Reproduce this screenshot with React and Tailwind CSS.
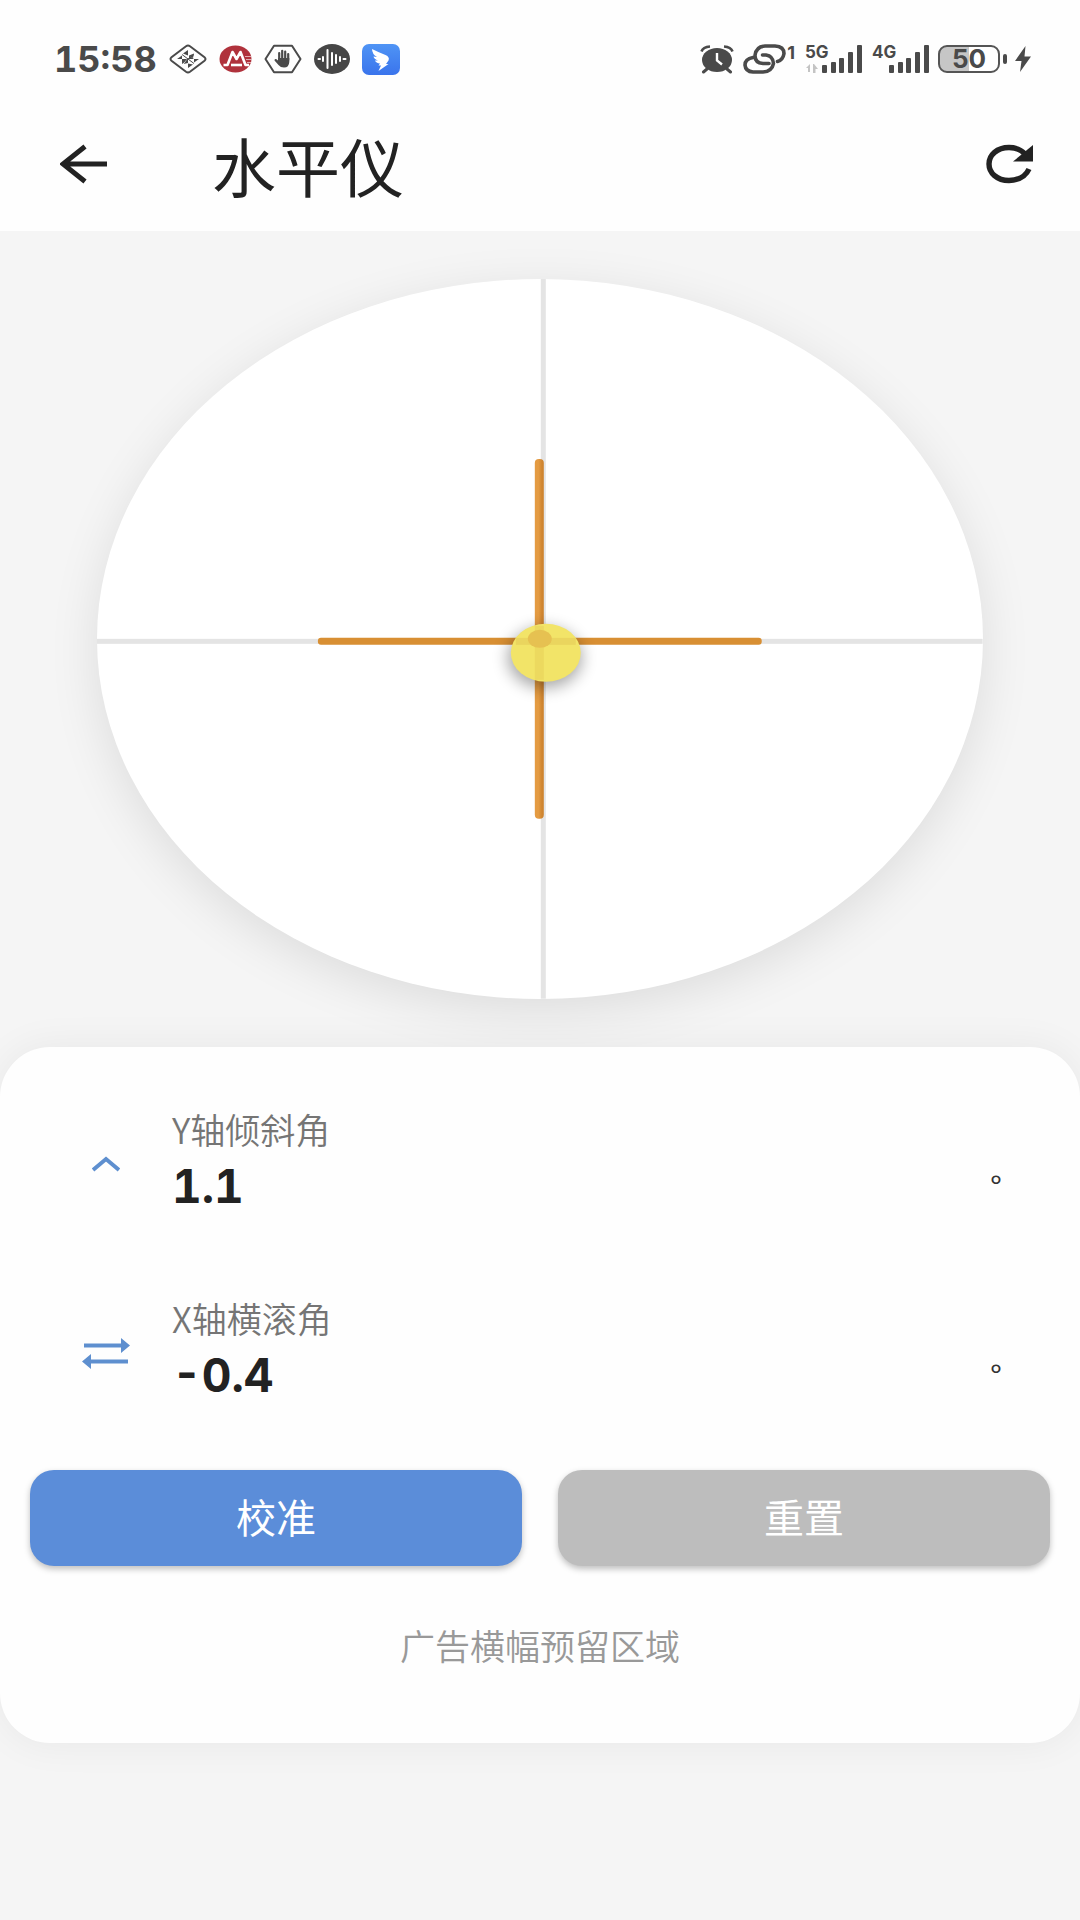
const AppBadges = () => (
  <div className="flex items-center gap-3">
    <svg viewBox="0 0 38 30" className="h-[30px] w-[38px]" fill="none" stroke="#4a4a4a">
      <path d="M17 2.2 Q19 .8 21 2.2 L35.5 13.2 Q37.5 15 35.5 16.8 L21 27.8 Q19 29.2 17 27.8 L2.5 16.8 Q.5 15 2.5 13.2 Z" strokeWidth="2" />
      <path d="M13 10.500 L25 19.500 M25 10.500 L13 19.500" strokeWidth="1" />
      <path d="M19 6 V11.500 L14 9.500 Z M20 11.500 L25 9.500 L24 14 Z M8 15 L13 11.500 V15 Z M13 15 H18 L13 19.500 Z M30 15 L25 18.500 V15 Z M20 15 H25 L20 11.500 Z M19 15 V19 L14.500 20 Z M19 24 V19.500 L24 20.500 Z" fill="#4a4a4a" stroke="none" />
    </svg>
    <svg viewBox="0 0 33 28" className="h-7 w-[33px]">
      <ellipse cx="16.500" cy="14" rx="16" ry="13.500" fill="#b0323c" />
      <path d="M4.500 20 H8.500 L13.500 7 L17.500 14 L21.500 7 L26.500 20 H30" fill="none" stroke="#fff" strokeWidth="2.600" strokeLinejoin="round" />
      <path d="M12 20 H23" stroke="#fff" strokeWidth="2.600" />
      <path d="M26 11.500 H32 M27 14.500 H32.500 M28 17.500 H32" stroke="#fff" strokeOpacity=".6" strokeWidth="1" />
    </svg>
    <svg viewBox="0 0 38 30" className="h-[30px] w-[38px]" fill="none" stroke="#4a4a4a">
      <path d="M10 1.800 H28 L36.500 15 L28 28.200 H10 L1.500 15 Z" strokeWidth="2" strokeLinejoin="round" />
      <path d="M15.200 16 V9 M18.200 15 V6.800 M21.200 15 V7.500 M24.200 16 V10" strokeWidth="2.200" strokeLinecap="round" />
      <path d="M14 14 H25.300 V18 Q25 23.500 20 23.500 Q16.500 23.500 14.500 21 L10.500 16.500 Q10.500 14.500 12.500 15.200 L14 16.500 Z" fill="#4a4a4a" stroke="none" />
    </svg>
    <svg viewBox="0 0 36 30" className="h-[30px] w-9">
      <ellipse cx="18" cy="15" rx="18" ry="15" fill="#464646" />
      <path d="M9 13 V17 M13.500 6 V24 M18 9 V21 M22 11 V19 M26 13 V17" stroke="#fff" strokeWidth="2" strokeLinecap="round" />
      <path d="M4.500 15 H6 M29.500 15 H31.500" stroke="#fff" strokeWidth="2" strokeLinecap="round" />
    </svg>
    <svg viewBox="0 0 38 31" className="h-[31px] w-[38px]">
      <defs>
        <linearGradient id="wing" x1="0" y1="0" x2="0" y2="1">
          <stop offset="0" stopColor="#4f94f5" />
          <stop offset="1" stopColor="#3a74ec" />
        </linearGradient>
      </defs>
      <rect width="38" height="31" rx="7" fill="url(#wing)" />
      <path d="M10 5 Q17 8.500 23.500 11 Q28 13 26.500 16.500 L24 20 H26.500 L16.500 27 L19 21.500 H16.500 L18 19.500 Q14 19 13 16.500 L16 16.500 Q12 15 11.500 12.500 L15 13 Q10 10 10 5 Z" fill="#fff" />
    </svg>
  </div>
);

const Signal = ({ label, data }) => (
  <svg viewBox="0 -6 58 42" className="h-[42px] w-[58px]" fill="#4a4a4a">
    <text x="1" y="14" fontSize="17" fontWeight="700" fontFamily="Inter, sans-serif">{label}</text>
    {data && <path d="M2 24 L6 20 V28 H4 V24 Z M10 20 L14 25 H11.500 V29 H9 V20 Z" fill="#c4c4c4" />}
    <rect x="18" y="21" width="5" height="8" rx="1" />
    <rect x="27" y="18" width="5" height="11" rx="1" />
    <rect x="35" y="14" width="5" height="15" rx="1" />
    <rect x="44" y="8" width="5" height="21" rx="1" />
    <rect x="53" y="1" width="5" height="28" rx="1" />
  </svg>
);

const StatusBar = () => (
  <div className="flex h-24 items-center justify-between pt-[22px] pr-12 pl-[54px] text-[#4a4a4a]">
    <div className="flex items-center gap-3">
      <span className="font-[Inter,sans-serif] text-[36px] leading-none font-bold tabular-nums">15:58</span>
      <AppBadges />
    </div>
    <div className="flex items-center gap-[9px]">
      <svg viewBox="0 0 34 30" className="h-[30px] w-[34px]" fill="none" stroke="#4a4a4a">
        <ellipse cx="17" cy="16" rx="15" ry="12" fill="#4a4a4a" stroke="none" />
        <path d="M1.500 7.500 Q3 3 10 2.500 M32.500 7.500 Q31 3 24 2.500" strokeWidth="2.600" />
        <path d="M7 25 L3.500 28 M27 25 L30.500 28" strokeWidth="3" strokeLinecap="round" />
        <path d="M17 9 V16.500 L22 20.500" stroke="#fff" strokeWidth="2.400" />
      </svg>
      <svg viewBox="0 0 43 30" className="h-[30px] w-[43px]" fill="none" stroke="#4a4a4a" strokeWidth="3.600" strokeLinecap="round">
        <path d="M26 19.500 H20 Q12 19 12 11.500 Q13 2.500 22 2 H32 Q41 2.500 41 9.500 Q40 16 34.500 17.500" />
        <path d="M10 13.500 Q2 15 2 21 Q2.500 27.500 10 28 H20 Q29 27.500 30.500 19.500 Q30 12 23 11 H19.500" />
      </svg>
      <span className="-ml-2 self-start pt-1.5 font-[Inter,sans-serif] text-lg leading-none font-bold">1</span>
      <Signal label="5G" data />
      <Signal label="4G" />
      <div className="flex items-center gap-[3px]">
        <div className="flex h-7 w-[62px] items-center justify-center rounded-[9px] border-2 border-[#555] bg-linear-to-r from-[#c6c6c6] from-50% to-white to-50%">
          <span className="font-[Inter,sans-serif] text-[26px] leading-none font-bold">50</span>
        </div>
        <div className="h-[10px] w-1 rounded-sm bg-[#4a4a4a]" />
        <svg viewBox="0 0 18 26" className="ml-1 h-[26px] w-[18px]" fill="#4a4a4a">
          <path d="M11.500 0 L1 15 H7.500 L6 26 L17 10.500 H10.500 Z" />
        </svg>
      </div>
    </div>
  </div>
);

const Header = () => (
  <header className="flex h-[135px] items-center pr-[46px] pl-[60px]">
    <button type="button" aria-label="返回" className="flex">
      <svg viewBox="0 0 48 40" className="h-10 w-12" fill="none" stroke="#222" strokeWidth="5">
        <path d="M25 2.500 L3 20 L25 37.500 M3 20 H47" />
      </svg>
    </button>
    <h1 className="ml-[104px] flex-1 text-[64px] leading-none text-[#222]">水平仪</h1>
    <button type="button" aria-label="刷新" className="flex">
      <svg viewBox="0 0 48 40" className="h-10 w-12">
        <path d="M39 10 Q33 3.500 23 3.500 C11 3.500 3 11 3 20 C3 29 11 36.500 23 36.500 Q38 36 43 25" fill="none" stroke="#222" strokeWidth="5.400" />
        <path d="M47 1 V17.500 H27 Z" fill="#222" />
      </svg>
    </button>
  </header>
);

const Dial = () => (
  <div className="mx-[9%] rounded-[50%] bg-white shadow-[0_12px_50px_rgba(0,0,0,0.1)]">
    <svg viewBox="0 0 886 720" className="block h-auto w-full">
      <defs>
        <linearGradient id="needle">
          <stop offset="0.400" stopColor="#e49b42" />
          <stop offset="0.800" stopColor="#cf8530" />
        </linearGradient>
        <filter id="soft" x="-50%" y="-50%" width="200%" height="200%">
          <feGaussianBlur stdDeviation="8" />
        </filter>
      </defs>
      <rect x="444" y="0" width="5" height="720" fill="#e4e4e4" />
      <rect x="0" y="360" width="886" height="5" fill="#e4e4e4" />
      <rect x="221" y="359" width="444" height="7" rx="3" fill="#d88f33" />
      <rect x="438" y="180" width="9" height="360" rx="4" fill="url(#needle)" />
      <ellipse cx="448" cy="379" rx="37" ry="30" fill="#000" opacity=".35" filter="url(#soft)" />
      <ellipse cx="449" cy="374" rx="35" ry="29" fill="#f2e468" />
      <rect x="419" y="359" width="60" height="7" fill="#ead55e" />
      <rect x="438" y="347" width="9" height="54" fill="#ecd95f" />
      <ellipse cx="443" cy="360" rx="12" ry="9" fill="#e6c151" />
    </svg>
  </div>
);

const Reading = ({ icon, label, value }) => (
  <div className="flex h-[189px] items-center px-[78px]">
    <div className="flex w-14 justify-center">{icon}</div>
    <dl className="ml-[38px] flex-1">
      <dt className="text-[35px] leading-[44px] font-[350] text-[#757575]">{label}</dt>
      <dd className="font-[Inter,sans-serif] text-[46px] leading-[70px] font-bold text-[#222] tabular-nums">{value}</dd>
    </dl>
    <span className="mt-10 font-['Noto_Sans',sans-serif] text-[28px] text-[#333]">°</span>
  </div>
);

const UpIcon = () => (
  <svg viewBox="0 0 28 16" className="h-4 w-7" fill="none" stroke="#5e8fcf" strokeWidth="4">
    <path d="M1 14 L14 3 L27 14" />
  </svg>
);

const SwapIcon = () => (
  <svg viewBox="0 0 48 32" className="h-8 w-12" fill="#5e8fcf">
    <path d="M2 6.500 H39 V1 L48 8.500 L39 16 V10.500 H2 Z" />
    <path d="M46 22.500 H9 V17 L0 24.500 L9 32 V26.500 H46 Z" />
  </svg>
);

const App = () => {
  const buttonClass =
    "h-24 rounded-3xl pb-1 text-[40px] leading-none text-white shadow-[0_3px_6px_rgba(0,0,0,0.25)]";

  return (
    <div className="min-h-screen bg-[#f5f5f5] font-['Noto_Sans_CJK_SC',sans-serif]">
      <div className="bg-[#fefefe]">
        <StatusBar />
        <Header />
      </div>
      <main>
        <section className="py-12">
          <Dial />
        </section>
        <section className="rounded-[50px] bg-[#fefefe] pt-[23px] pb-[68px] shadow-[0_0_40px_rgba(0,0,0,0.06)]">
          <Reading icon={<UpIcon />} label="Y轴倾斜角" value="1.1" />
          <Reading icon={<SwapIcon />} label="X轴横滚角" value="-0.4" />
          <div className="mt-[22px] grid grid-cols-2 gap-9 px-[30px]">
            <button type="button" className={`${buttonClass} bg-[#5b8dd9]`}>校准</button>
            <button type="button" className={`${buttonClass} bg-[#bdbdbd]`}>重置</button>
          </div>
          <p className="mt-[49px] text-center text-[35px] leading-[60px] font-[350] text-[#999]">
            广告横幅预留区域
          </p>
        </section>
      </main>
    </div>
  );
};

export default App;
